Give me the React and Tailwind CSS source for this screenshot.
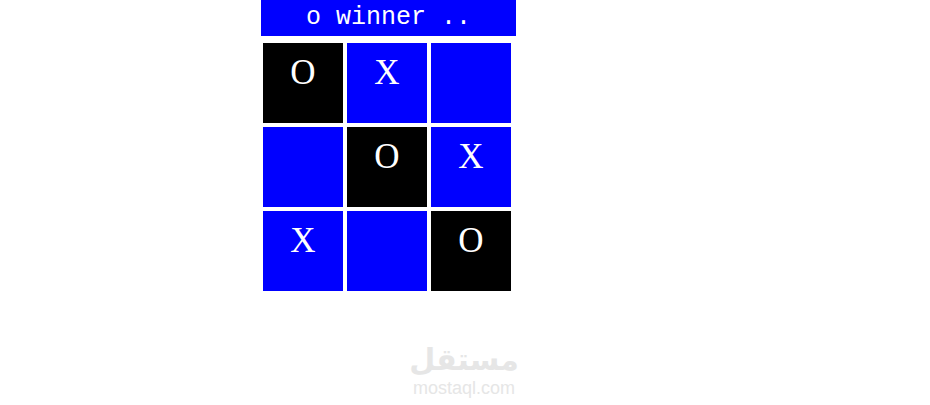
const board = [
  ['O', 'X', ''],
  ['', 'O', 'X'],
  ['X', '', 'O'],
];

const winning = [
  [true, false, false],
  [false, true, false],
  [false, false, true],
];

export default function App() {
  return (
    <div className="relative h-[405px] w-[930px] bg-white">
      <div className="pl-[261px]">
        <div className="h-[36px] w-[255px] bg-[#0000ff] text-center font-['Liberation_Mono','Courier_New',monospace] text-[25px] leading-[35px] whitespace-pre text-white">
          o winner ..
        </div>
        <div className="ml-[2px] mt-[7px] grid w-[248px] grid-cols-3 gap-[4px]">
          {board.flatMap((row, r) =>
            row.map((cell, c) => (
              <div
                key={`${r}-${c}`}
                className={`h-[80px] pt-[12px] text-center font-['Liberation_Serif','Times_New_Roman',serif] text-[35px] leading-[35px] text-white ${
                  winning[r][c] ? 'bg-black' : 'bg-[#0000ff]'
                }`}
              >
                {cell}
              </div>
            ))
          )}
        </div>
      </div>

      <div className="pointer-events-none absolute left-[410px] top-[340px] flex w-[108px] flex-col items-center text-[#e6e6e6]">
        <span className="font-['Noto_Sans','DejaVu_Sans',sans-serif] text-[30px] font-bold leading-[38px]">
          مستقل
        </span>
        <span className="font-['Liberation_Sans',Arial,sans-serif] text-[18px] leading-[20px]">
          mostaql.com
        </span>
      </div>
    </div>
  );
}
